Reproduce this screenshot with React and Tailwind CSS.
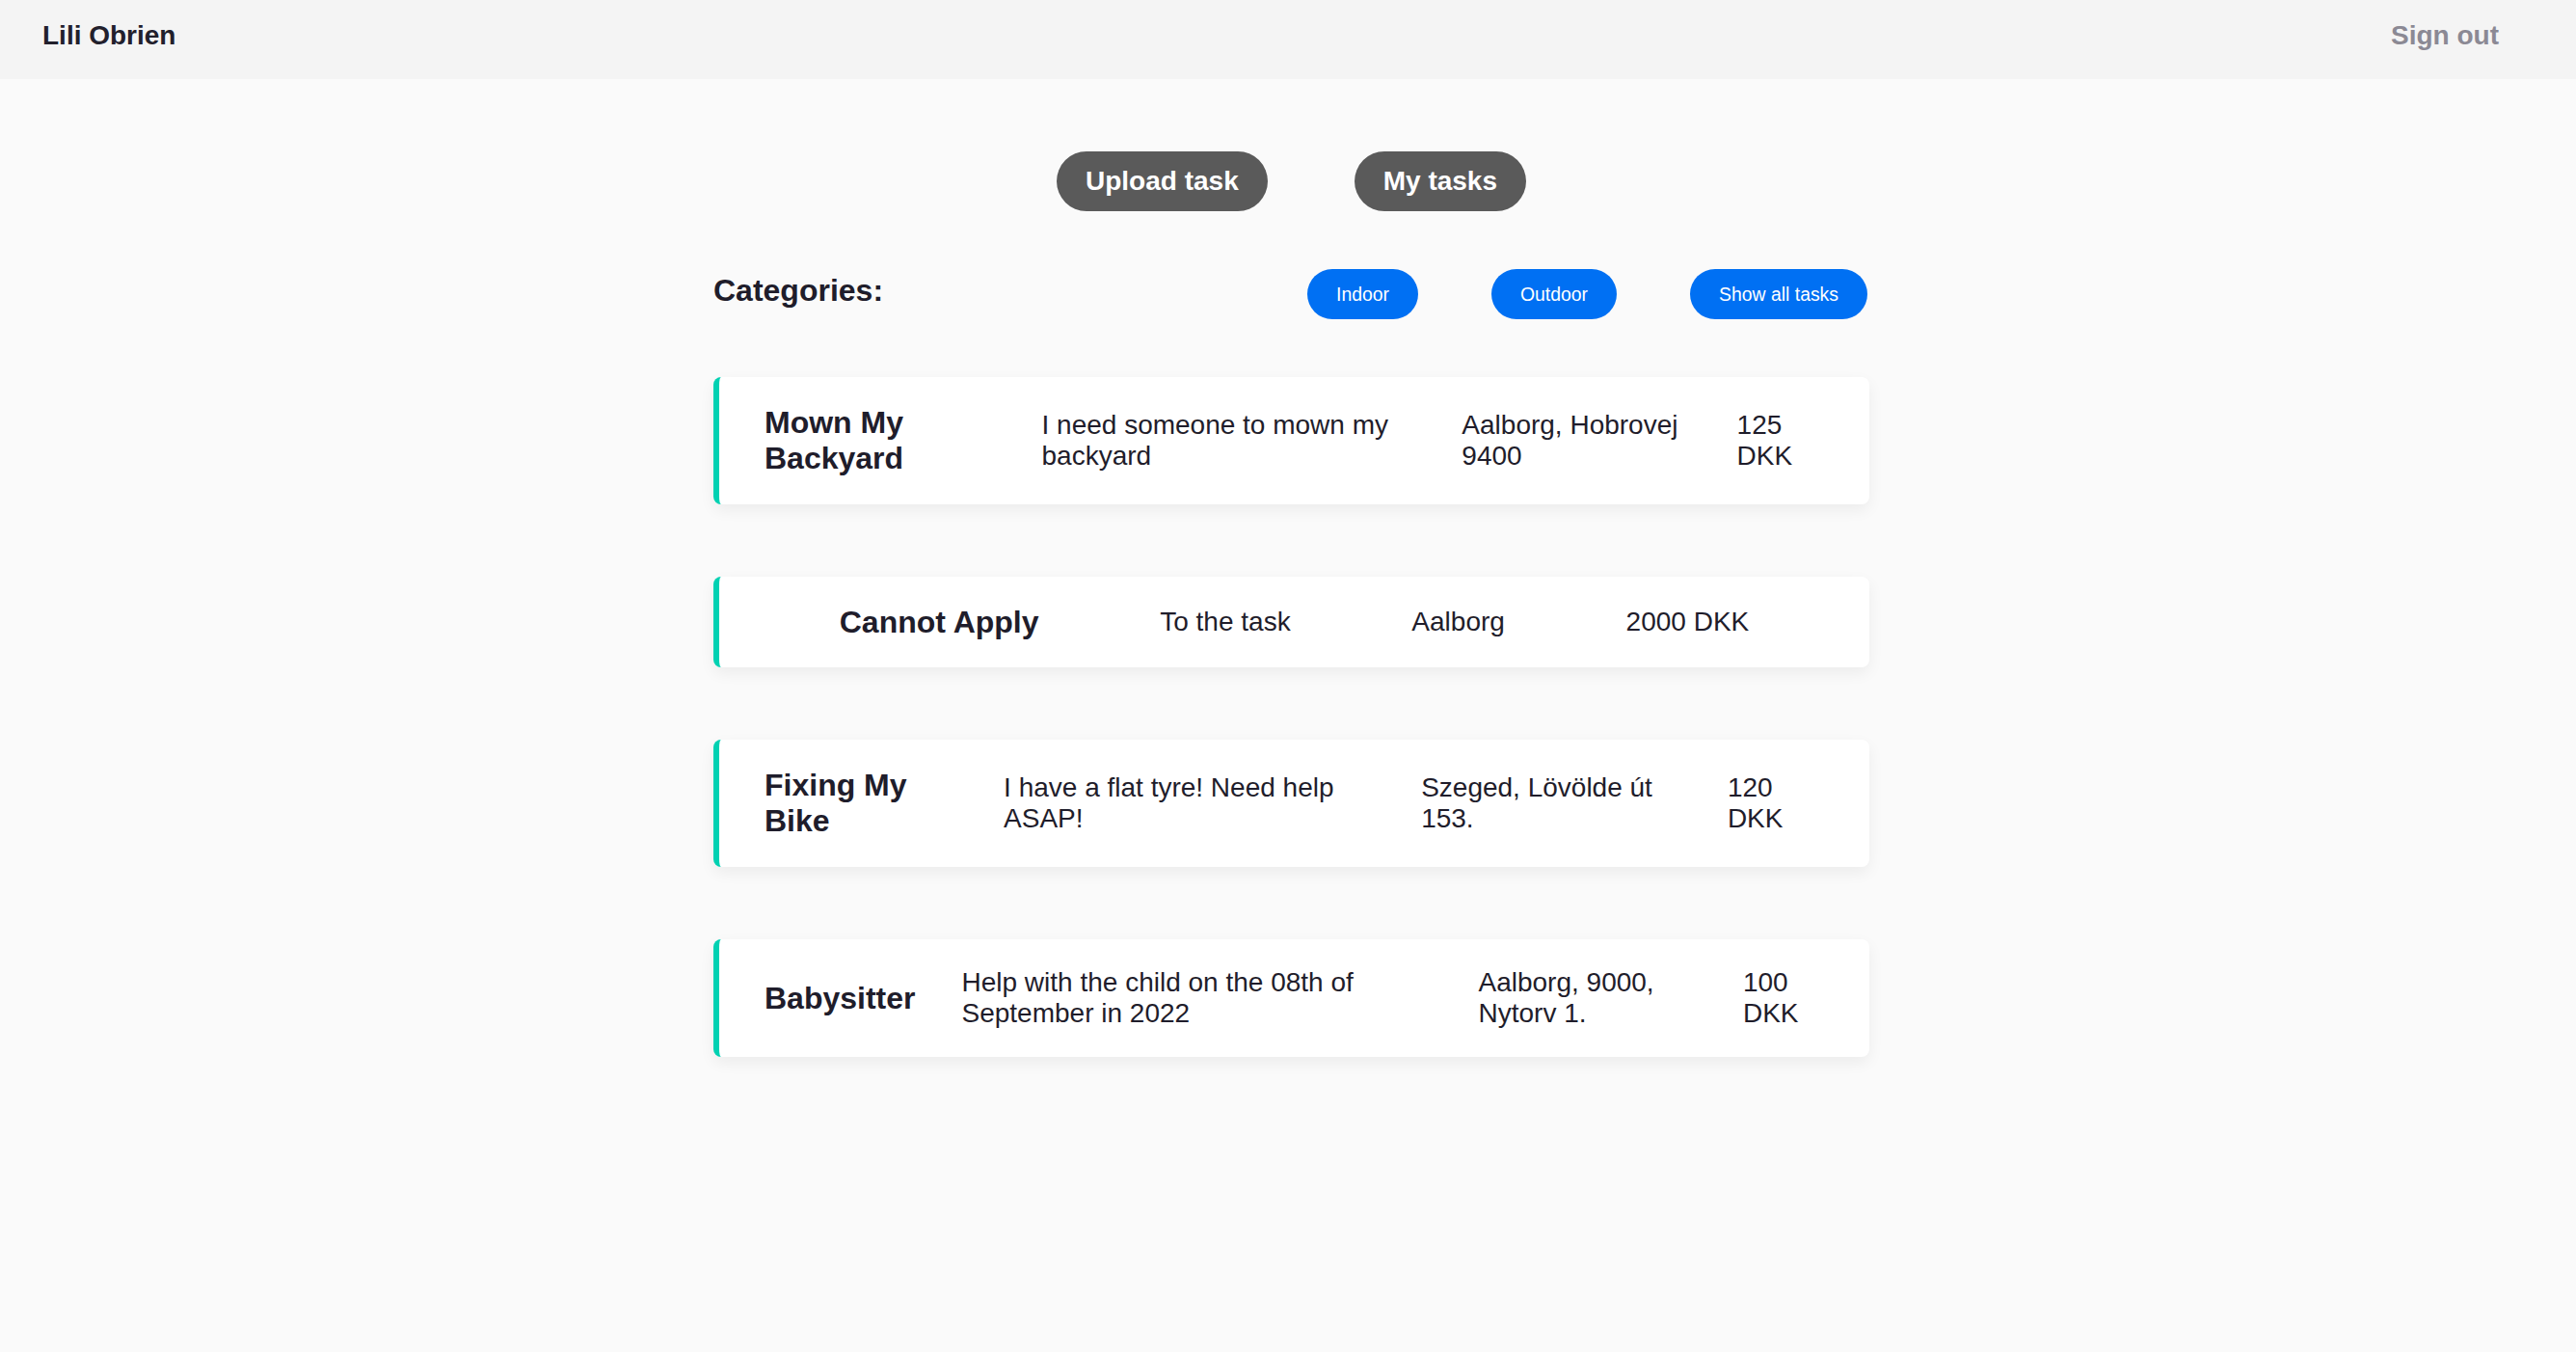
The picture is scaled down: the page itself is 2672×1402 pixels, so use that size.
import React from "react";

const tasks = [
  { title: "Mown My Backyard", desc: "I need someone to mown my backyard", loc: "Aalborg, Hobrovej 9400", price: "125 DKK" },
  { title: "Cannot Apply", desc: "To the task", loc: "Aalborg", price: "2000 DKK" },
  { title: "Fixing My Bike", desc: "I have a flat tyre! Need help ASAP!", loc: "Szeged, Lövölde út 153.", price: "120 DKK" },
  { title: "Babysitter", desc: "Help with the child on the 08th of September in 2022", loc: "Aalborg, 9000, Nytorv 1.", price: "100 DKK" },
];

export default function App() {
  return (
    <div
      className="min-h-[1402px] bg-[#fafafa] text-[#1f1d2b]"
      style={{ fontFamily: '"Liberation Sans", Arial, Helvetica, sans-serif' }}
    >
      <header className="h-[82px] bg-[#f4f4f4] flex items-start justify-between pl-[44px] pr-[80px] pt-[21px]">
        <div className="text-[28px] font-bold leading-[1.15] text-[#22202c]">Lili Obrien</div>
        <button className="text-[28px] font-bold leading-[1.15] text-[#8b8994]">Sign out</button>
      </header>

      <div className="pl-[7px]">
        <div className="mx-auto w-[1199px]">
          <div className="flex justify-center gap-[90px] mt-[75px]">
            <button className="h-[62px] px-[30px] rounded-full bg-[#5a5a5a] text-white text-[28px] font-bold leading-[1.15]">
              Upload task
            </button>
            <button className="h-[62px] px-[30px] rounded-full bg-[#5a5a5a] text-white text-[28px] font-bold leading-[1.15]">
              My tasks
            </button>
          </div>

          <div className="flex items-center mt-[60px]">
            <h2 className="text-[32px] font-bold leading-[1.15] mb-[7px]">Categories:</h2>
            <div className="ml-auto mr-[2px] flex gap-[76px]">
              <button className="h-[52px] px-[30px] rounded-full bg-[#0070f3] text-white text-[19.4px] leading-[1.15]">Indoor</button>
              <button className="h-[52px] px-[30px] rounded-full bg-[#0070f3] text-white text-[19.4px] leading-[1.15]">Outdoor</button>
              <button className="h-[52px] px-[30px] rounded-full bg-[#0070f3] text-white text-[19.4px] leading-[1.15]">Show all tasks</button>
            </div>
          </div>

          <div className="flex flex-col gap-[75px] mt-[60px]">
            {tasks.map((t) => (
              <div
                key={t.title}
                className="bg-white rounded-[8px] border-l-[6px] border-[#00d1b2] shadow-[0_6px_16px_rgba(0,0,0,0.06)] flex items-center justify-evenly gap-[48px] px-[47px] py-[29px]"
              >
                <div className="text-[32px] font-bold leading-[1.15]">{t.title}</div>
                <div className="text-[28px] leading-[1.15]">{t.desc}</div>
                <div className="text-[28px] leading-[1.15]">{t.loc}</div>
                <div className="text-[28px] leading-[1.15]">{t.price}</div>
              </div>
            ))}
          </div>
        </div>
      </div>
    </div>
  );
}
